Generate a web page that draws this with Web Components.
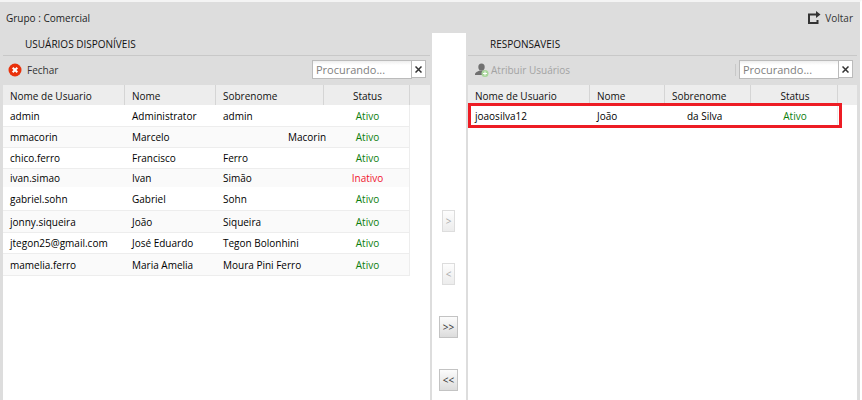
<!DOCTYPE html>
<html lang="pt-BR">
<head>
<meta charset="utf-8">
<title>Grupo : Comercial</title>
<style>
html, body { margin: 0; height: 100%; }
body { background: #fff; font: 10px/14px "Open Sans", sans-serif; color: #000; }
</style>
</head>
<body>
<group-page>
  <span slot="title">Grupo : Comercial</span>
  <user-panel slot="left" kind="available"></user-panel>
  <move-buttons slot="middle"></move-buttons>
  <user-panel slot="right" kind="assigned"></user-panel>
</group-page>
<script>
class GroupPage extends HTMLElement {
  constructor() {
    super();
    this.attachShadow({ mode: 'open' }).innerHTML = `
<style>
:host { display: flex; flex-direction: column; min-height: 100%; box-sizing: border-box; padding: 0 3px; border-top: 2px solid #f4f4f4; border-right: 2px solid #fff; background: #ddd; }
header { display: flex; justify-content: space-between; align-items: center; height: 31px; padding: 0 4px 0 3px; color: #222; }
a { display: flex; align-items: center; gap: 4px; color: #333; text-decoration: none; }
main { flex: 1; display: flex; gap: 2px; }
slot[name=left]::slotted(*) { flex: 427 1 0; min-width: 0; }
slot[name=right]::slotted(*) { flex: 389 1 0; min-width: 0; }
</style>
<header><slot name="title"></slot>
<a href="#"><svg width="14" height="16" viewBox="0 0 14 16"><path d="M9 4.500H2V13H10.500V10" fill="none" stroke="#333" stroke-width="2"/><path d="M9 1l4.500 3.500L9 8z" fill="#333"/></svg>Voltar</a></header>
<main><slot name="left"></slot><slot name="middle"></slot><slot name="right"></slot></main>`;
  }
}
customElements.define('group-page', GroupPage);

class SearchField extends HTMLElement {
  constructor() {
    super();
    this.attachShadow({ mode: 'open' }).innerHTML = `
<style>
:host { display: flex; align-items: flex-start; }
input { box-sizing: border-box; width: 100px; height: 19px; margin: 0; padding: 0 3px; border: 1px solid #bbb; border-radius: 0; background: linear-gradient(#eee, #fff 4px); font: 11px/17px "Open Sans", sans-serif; color: #333; }
input::placeholder { color: #808080; opacity: 1; }
button { display: grid; place-items: center; box-sizing: border-box; width: 15px; height: 18px; margin: 0 0 0 -1px; padding: 0; border: 1px solid #bbb; background: #fff; }
</style>
<input type="text" placeholder="Procurando..." aria-label="Procurando"><button type="button" aria-label="Limpar"><svg width="7" height="7" viewBox="0 0 7 7"><path d="M.5.5l6 6M6.500.5l-6 6" stroke="#333" stroke-width="1.500"/></svg></button>`;
  }
}
customElements.define('search-field', SearchField);

const ICONS = {
  close: '<svg width="14" height="14" viewBox="0 0 14 14"><circle cx="7" cy="7" r="6.500" fill="#e9310b"/><path d="M4.700 4.700l4.600 4.600M9.300 4.700l-4.600 4.600" stroke="#fff" stroke-width="2"/></svg>',
  add: '<svg width="14" height="14" viewBox="0 0 14 14"><ellipse cx="6.500" cy="4" rx="3.200" ry="3.600" fill="#707070"/><path d="M0 12c0-3 2-3 4.500-4.500h4L12 10v2z" fill="#707070"/><circle cx="10" cy="10.500" r="3.500" fill="#a8d69b"/><path d="M10 8.500v4M8 10.500h4" stroke="#fff"/></svg>'
};
const PANELS = {
  available: {
    title: 'USUÁRIOS DISPONÍVEIS', action: 'Fechar', icon: 'close', cols: [91, 108, 86],
    rows: [
      ['admin', 'Administrator', 'admin', 'Ativo', 'tall'],
      ['mmacorin', 'Marcelo', 'Macorin', 'Ativo', 'even far'],
      ['chico.ferro', 'Francisco', 'Ferro', 'Ativo', ''],
      ['ivan.simao', 'Ivan', 'Simão', 'Inativo', 'even short'],
      ['gabriel.sohn', 'Gabriel', 'Sohn', 'Ativo', 'taller'],
      ['jonny.siqueira', 'João', 'Siqueira', 'Ativo', 'even tall'],
      ['jtegon25@gmail.com', 'José Eduardo', 'Tegon Bolonhini', 'Ativo', ''],
      ['mamelia.ferro', 'Maria Amelia', 'Moura Pini Ferro', 'Ativo', 'even tall']
    ]
  },
  assigned: {
    title: 'RESPONSAVEIS', action: 'Atribuir Usuários', icon: 'add', cols: [75, 86, 87],
    rows: [['joaosilva12', 'João', 'da Silva', 'Ativo', 'tall near']]
  }
};
class UserPanel extends HTMLElement {
  connectedCallback() {
    if (this.shadowRoot) return;
    const kind = this.getAttribute('kind');
    const p = PANELS[kind];
    const off = kind === 'assigned';
    this.attachShadow({ mode: 'open' }).innerHTML = `
<style>
:host { display: block; background: #fff; }
h2 { margin: 0; height: 22px; padding-left: 22px; border-bottom: 1px solid #c8c8c8; background: #ddd; font: 10px/22px "Open Sans", sans-serif; color: #111; }
.bar { display: flex; align-items: center; height: 29px; box-sizing: border-box; padding: 0 4px 2px 5px; background: #ddd; }
.action { display: flex; align-items: center; gap: 5px; padding: 0; border: 0; background: none; font: inherit; color: #333; }
.action:disabled { color: #a3a3a3; gap: 2px; padding-left: 2px; }
search-field { margin-left: auto; }
.sep { margin-left: auto; margin-right: 3px; height: 12px; border-left: 1px solid #c8c8c8; }
.sep + search-field { margin-left: 0; }
table { width: 100%; table-layout: fixed; border-collapse: separate; border-spacing: 0; }
th, td { box-sizing: border-box; padding: 0 0 0 7px; text-align: left; font-weight: 400; white-space: nowrap; }
th { height: 20px; padding-top: 2px; background: #ededed; border-right: 1px solid #d5d5d5; color: #111; }
th:last-child { border-right: 0; }
td { height: 21px; border-bottom: 1px solid #ededed; color: #000; }
.tall td { height: 22px; }
.taller td { height: 24px; }
.short td { height: 18px; border-bottom: 0; }
.even td { background: #fafafa; }
.far td:nth-child(3) { padding-left: 72px; }
.near td:nth-child(3) { padding-left: 22px; }
th:nth-child(4), td:nth-child(4) { padding-left: 2px; text-align: center; }
td:nth-child(4) { color: #0b7d0b; border-right: 1px solid #ededed; }
td.red { color: #f0142d; }
td:last-child { background: #fff; border: 0; }
tbody { position: relative; }
.marked::after { content: ""; position: absolute; inset: -2px 15px -1px 0; border: 3px solid #ed1c24; }
</style>
<h2>${p.title}</h2>
<div class="bar"><button class="action" type="button" ${off ? 'disabled' : ''}>${ICONS[p.icon]}${p.action}</button>${off ? '<span class="sep"></span>' : ''}<search-field></search-field></div>
<table><colgroup><col>${p.cols.map(w => `<col style="width:${w}px">`).join('')}<col style="width:${off ? 19 : 20}px"></colgroup>
<thead><tr><th>Nome de Usuario</th><th>Nome</th><th>Sobrenome</th><th>Status</th><th></th></tr></thead>
<tbody class="${off ? 'marked' : ''}">${p.rows.map(r => `<tr class="${r[4]}"><td>${r[0]}</td><td>${r[1]}</td><td>${r[2]}</td><td class="${r[3] === 'Inativo' ? 'red' : ''}">${r[3]}</td><td></td></tr>`).join('')}</tbody></table>`;
  }
}
customElements.define('user-panel', UserPanel);

class MoveButtons extends HTMLElement {
  constructor() {
    super();
    this.attachShadow({ mode: 'open' }).innerHTML = `
<style>
:host { display: flex; flex-direction: column; align-items: center; gap: 31px; box-sizing: border-box; width: 34px; padding: 177px 1px 9px 0; background: #fff; }
button { box-sizing: border-box; width: 19px; height: 22px; padding: 0; border: 1px solid #c3c3c3; background: linear-gradient(#fcfcfc, #dcdcdc); font: 10px/20px "Open Sans", sans-serif; color: #333; }
button:disabled { width: 13px; border-color: #ddd; background: linear-gradient(#fdfdfd, #ececec); color: #aaa; }
</style>
<button type="button" disabled>&gt;</button><button type="button" disabled>&lt;</button><button type="button">&gt;&gt;</button><button type="button">&lt;&lt;</button>`;
  }
}
customElements.define('move-buttons', MoveButtons);
</script>
</body>
</html>
